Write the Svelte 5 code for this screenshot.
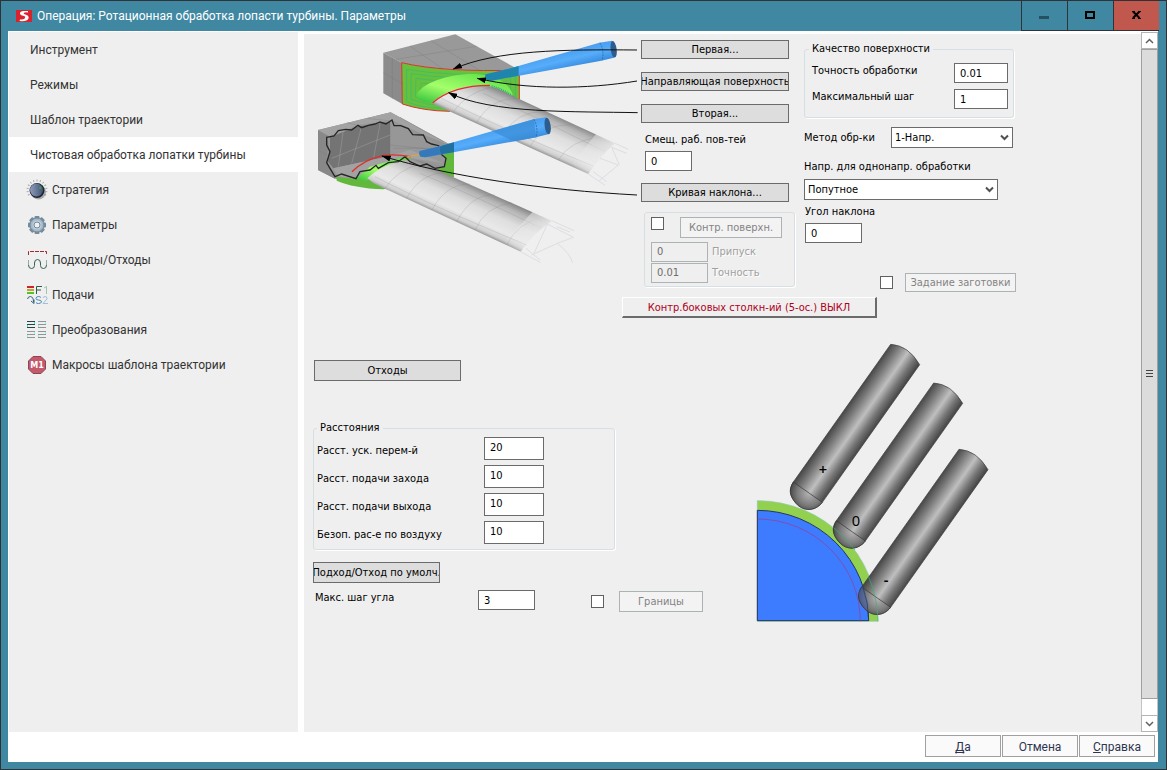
<script>
    let selected = $state('blade');
    let method = $state('one');
    let direction = $state('climb');

    const items = [
        { id: 'tool', label: 'Инструмент' },
        { id: 'modes', label: 'Режимы' },
        { id: 'template', label: 'Шаблон траектории' },
        { id: 'blade', label: 'Чистовая обработка лопатки турбины' },
        { id: 'strategy', label: 'Стратегия', icon: 'knob' },
        { id: 'params', label: 'Параметры', icon: 'gear' },
        { id: 'leads', label: 'Подходы/Отходы', icon: 'leads' },
        { id: 'feeds', label: 'Подачи', icon: 'feeds' },
        { id: 'transforms', label: 'Преобразования', icon: 'transforms' },
        { id: 'macros', label: 'Макросы шаблона траектории', icon: 'macros' }
    ];

    const distances = $state([
        { id: 'rapid', label: 'Расст. уск. перем-й', value: '20' },
        { id: 'feed-in', label: 'Расст. подачи захода', value: '10' },
        { id: 'feed-out', label: 'Расст. подачи выхода', value: '10' },
        { id: 'air', label: 'Безоп. рас-е по воздуху', value: '10' }
    ]);

    const ticks = Array.from({ length: 13 }, (_, i) => -210 + i * 20);
    const teeth = [0, 45, 90, 135, 180, 225, 270, 315];
</script>

{#snippet chevron()}
    <svg class="chevron" width="9" height="7" viewBox="0 0 9 7" aria-hidden="true">
        <path d="M1 1.5 L4.5 5 L8 1.5" fill="none" stroke="#505050" stroke-width="2" />
    </svg>
{/snippet}

{#snippet cutter(cx, cy, sign, tx, ty)}
    <g transform="translate({cx} {cy})">
        <path
            d="M160 456 L452 43 Q505 46 539 104 L247 517 C225 545 190 545 168 520 C148 497 146 478 160 456 Z"
            fill="url(#steel)" fill-opacity="0.96" stroke="#3c3c3c" stroke-width="2"
        />
        <path
            d="M160 456 L247 517 C225 545 190 545 168 520 C148 497 146 478 160 456 Z"
            fill="url(#ball)" stroke="#333" stroke-width="2"
        />
    </g>
    <text x={tx} y={ty} class="sign" class:heavy={sign !== '0'}>{sign}</text>
{/snippet}

<div class="window">
    <header class="titlebar">
        <svg class="logo" width="16" height="12" viewBox="0 0 16 12" aria-hidden="true">
            <rect width="16" height="12" fill="#d8232e" />
            <path d="M12 1 H7 Q3.500 1.500 4 4 Q4.500 5.500 8 6 Q10 6.500 9 8 Q8 9.500 4 9.500 L3.500 11 Q11 11.800 12.500 8.500 Q13.300 5.500 9.500 4.500 Q7 4 8 2.800 Q9 2 12 2.500 Z" fill="#fff" />
        </svg>
        <h1>Операция: Ротационная обработка лопасти турбины. Параметры</h1>
        <div class="controls">
            <button type="button" aria-label="Свернуть">
                <svg width="11" height="11" viewBox="0 0 11 11"><rect x="0" y="6" width="10" height="3" fill="#25505f" /></svg>
            </button>
            <button type="button" aria-label="Развернуть">
                <svg width="11" height="11" viewBox="0 0 11 11"><rect x="1" y="2" width="8" height="6" fill="none" stroke="#000" stroke-width="2" /></svg>
            </button>
            <button type="button" class="close" aria-label="Закрыть">
                <svg width="11" height="11" viewBox="0 0 11 11"><path d="M2 1.500 L8.500 8 M8.500 1.500 L2 8" stroke="#000" stroke-width="2" /><path d="M1 1.500 H4 M7 1.500 H10 M1 8.500 H4 M7 8.500 H10" stroke="#000" /></svg>
            </button>
        </div>
    </header>

    <div class="client">
        <div class="body">
            <nav class="sidebar">
                {#each items as item (item.id)}
                    <button
                        type="button"
                        class="nav-item"
                        class:selected={selected === item.id}
                        onclick={() => (selected = item.id)}
                    >
                        {#if item.icon}
                            <svg class="nav-icon" width="22" height="22" viewBox="0 0 22 22" aria-hidden="true">
                                {#if item.icon === 'knob'}
                                    {#each ticks as a}
                                        <path d="M19.500 11 H21.500" stroke="#a9a9a9" transform="rotate({a} 11 11)" />
                                    {/each}
                                    <circle cx="12.500" cy="13" r="7.500" fill="#8f8f8f" opacity="0.7" />
                                    <circle cx="11" cy="11.500" r="7.500" fill="#20242f" />
                                    <circle cx="10.500" cy="11" r="6.500" fill="url(#knob)" />
                                    <path d="M13.500 8 L15 9.500" stroke="#2fa838" stroke-width="2" />
                                {:else if item.icon === 'gear'}
                                    {#each teeth as a}
                                        <rect x="8.500" y="2" width="5" height="5" rx="1" fill="#74899a" transform="rotate({a} 11 11)" />
                                    {/each}
                                    <circle cx="11" cy="11" r="7" fill="#a3b8c8" stroke="#74899a" />
                                    <circle cx="11" cy="11" r="4.500" fill="#c4d2dd" />
                                    <circle cx="11" cy="11" r="3" fill="#efefef" stroke="#71879a" />
                                {:else if item.icon === 'leads'}
                                    <path d="M2.500 6 V2.500 H20.500 V6" fill="none" stroke="#a32a2a" stroke-dasharray="4 1" />
                                    <path d="M2.500 11 V16 M20.500 11 V16" stroke="#8fae9d" />
                                    <path d="M2.500 16 Q2.500 19.500 5.500 19.500 Q8.500 19.500 8.500 16.500 V14 Q8.500 10.500 11.500 10.500 Q14.500 10.500 14.500 14 V16.500 Q14.500 19.500 17.500 19.500 Q20.500 19.500 20.500 16" fill="none" stroke="#35604b" />
                                {:else if item.icon === 'feeds'}
                                    <path d="M1 3 H8" stroke="#c9252b" stroke-width="2" />
                                    <path d="M1 6 H8" stroke="#c9a02b" stroke-width="2" />
                                    <path d="M1 9 H8" stroke="#55c42b" stroke-width="2" />
                                    <path d="M10.500 10 V2.500 H16 M10.500 6 H15" fill="none" stroke="#2f5a47" />
                                    <path d="M18 4 L20.500 2.500 V10" fill="none" stroke="#9cc4ae" />
                                    <path d="M1.500 15 Q2 12.500 4.500 12.500 Q7.500 13 7.500 18 M5 17 L8 19.500 V15.500" fill="none" stroke="#2f6080" />
                                    <path d="M15 13.500 Q14 12.500 12.500 12.500 Q10 12.500 10 14.500 Q10 16 12.500 16 Q15.500 16 15.500 18 Q15 19.500 12.500 19.500 Q10.500 19.500 10 18.500" fill="none" stroke="#4c87b0" />
                                    <path d="M17 14 Q17.500 12.500 19 12.500 Q21.500 12.500 21 15 L17 19.500 H22" fill="none" stroke="#9fc0dc" />
                                {:else if item.icon === 'transforms'}
                                    <path d="M1 2.500 H9 M1 5.500 H9 M1 8.500 H9" stroke="#274444" />
                                    <path d="M12 2.500 H20 M12 5.500 H20 M12 8.500 H20 M1 12.500 H9 M1 15.500 H9 M1 18.500 H9 M12 12.500 H20 M12 15.500 H20 M12 18.500 H20" stroke="#8f9696" />
                                    <path d="M8.500 3 V5 M1.500 6 V8" stroke="#2ee6e6" />
                                    <path d="M19.500 3 V5 M12.500 6 V8 M8.500 13 V15 M1.500 16 V18 M19.500 13 V15 M12.500 16 V18" stroke="#8ff0f0" />
                                {:else}
                                    <path d="M7 2.500 H15 L19.500 7 V15 L15 19.500 H7 L2.500 15 V7 Z" fill="#c35a6c" stroke="#8f4453" />
                                    <text x="11" y="14" class="macro">M1</text>
                                {/if}
                            </svg>
                        {/if}
                        <span>{item.label}</span>
                    </button>
                {/each}
            </nav>

            <main class="panel">
                <div class="top">
                    <svg class="scheme" width="331" height="236" viewBox="0 12 993 708" role="img" aria-label="Схема обработки лопатки">
                        <defs>
                            <linearGradient id="knob"><stop offset="0" stop-color="#8c9cbc" /><stop offset="1" stop-color="#455474" /></linearGradient>
                            <linearGradient id="bladeUp" gradientUnits="userSpaceOnUse" x1="690" y1="236" x2="641" y2="344">
                                <stop offset="0" stop-color="#8a8a8a" /><stop offset="0.15" stop-color="#b5b5b5" /><stop offset="0.45" stop-color="#dedede" /><stop offset="0.75" stop-color="#e9e9e9" /><stop offset="0.92" stop-color="#cfcfcf" /><stop offset="1" stop-color="#9a9a9a" />
                            </linearGradient>
                            <linearGradient id="bladeLow" gradientUnits="userSpaceOnUse" x1="500" y1="472" x2="450" y2="581">
                                <stop offset="0" stop-color="#8a8a8a" /><stop offset="0.15" stop-color="#b5b5b5" /><stop offset="0.45" stop-color="#dedede" /><stop offset="0.75" stop-color="#e9e9e9" /><stop offset="0.92" stop-color="#cfcfcf" /><stop offset="1" stop-color="#9a9a9a" />
                            </linearGradient>
                            <linearGradient id="fade">
                                <stop offset="0" stop-color="#efefef" stop-opacity="0" /><stop offset="1" stop-color="#efefef" stop-opacity="0.9" />
                            </linearGradient>
                            <linearGradient id="fillet" x1="0" y1="1" x2="1" y2="0">
                                <stop offset="0" stop-color="#2fbf3a" /><stop offset="0.4" stop-color="#a4ff6a" /><stop offset="1" stop-color="#4fd83f" />
                            </linearGradient>
                            <linearGradient id="taper" gradientUnits="userSpaceOnUse" x1="720" y1="75" x2="732" y2="125">
                                <stop offset="0" stop-color="#4a9ff0" /><stop offset="0.5" stop-color="#56adfb" /><stop offset="1" stop-color="#3a8ee0" />
                            </linearGradient>
                            <marker id="arrow" viewBox="0 0 28 18" refX="26" refY="9" markerWidth="28" markerHeight="18" markerUnits="userSpaceOnUse" orient="auto">
                                <path d="M28 9 L0 0 V18 Z" />
                            </marker>
                        </defs>

                        <!-- upper block -->
                        <path d="M220 68 L436 13 L628 120 Q400 128 275 98 Z" fill="#999" />
                        <path d="M220 68 L275 98 L277 222 L220 190 Z" fill="#8b8b8b" />
                        <path d="M300 48 L400 118 M363 32 L510 122 M258 88 L500 49 M247 83 V206 M220 128 L275 160" class="mesh" />
                        <path d="M275 98 Q400 128 628 120 V210 L420 244 Q340 243 277 222 Z" fill="#66c23c" />
                        <path d="M290 118 Q420 140 615 132 M290 118 V215 Q340 236 400 234 M303 130 Q420 152 600 140 M303 130 V208 Q350 226 395 226 M318 145 Q420 160 520 148 M318 145 L316 200 Q350 216 385 218 M334 160 Q400 162 440 155 M334 160 L328 190 M616 132 V200 M602 140 V196 M588 150 V190" fill="none" stroke="#36b878" stroke-width="2" />
                        <path d="M318 198 C330 160 420 128 500 132 C570 140 600 160 612 205 L520 168 Q430 170 368 216 Q335 222 318 198 Z" fill="url(#fillet)" />
                        <path d="M545 168 Q590 180 620 208" fill="none" stroke="#1aa98a" stroke-width="5" stroke-dasharray="3 3" />
                        <path d="M275 98 Q400 128 628 120 V208 M275 98 L277 222 Q340 243 420 244" fill="none" stroke="#e0302a" stroke-width="3" />
                        <path d="M368 216 Q430 165 520 166 Q560 170 600 194 L915 340 Q870 380 835 432 L385 229 Q365 222 368 216 Z" fill="url(#bladeUp)" />
                        <path d="M520 190 Q700 270 885 365 M395 205 Q560 290 850 408 M430 245 Q470 190 540 172 M500 278 Q540 205 620 206 M580 312 Q620 245 700 244 M660 350 Q700 280 790 285 M745 390 Q780 330 870 322" class="mesh faint" />
                        <path d="M860 310 L920 338 Q870 380 838 436 L780 408 Z" fill="url(#fade)" />
                        <path d="M368 218 Q430 166 540 166" fill="none" stroke="#e0302a" stroke-width="4" />
                        <path d="M915 340 L955 358 M905 352 L950 370 M835 432 L885 466 M850 425 L890 455 M870 385 L925 405 L868 452 M905 352 L928 404" fill="none" stroke="#dcdee3" stroke-width="3" />

                        <!-- lower block -->
                        <path d="M24 300 L242 247 L432 350 V440 L230 478 L75 446 L24 420 Z" fill="#939393" />
                        <path d="M24 300 L60 320 L50 380 L75 446 L24 420 Z" fill="#888" />
                        <path d="M24 300 L242 247 L432 350 L350 318 L245 271 L140 290 L60 320 Z" fill="#a3a3a3" />
                        <path d="M432 350 V442 L380 420 L405 405 L408 385 L388 350 Z M80 436 L135 446 L240 392 L290 380 L330 400 L432 442 L220 478 Q130 474 80 452 Z" fill="#62b83c" />
                        <path d="M50 322 L107 300 L140 286 L245 271 L300 300 L345 318 L390 350 L408 388 L402 410 L285 382 L180 415 L138 446 L75 440 L50 395 L60 362 Z" fill="#979797" />
                        <path d="M60 322 L140 290 L240 275 V378 L70 415 L52 392 L60 362 Z" fill="#747474" />
                        <path d="M70 415 L240 378 L300 360 L402 400 L285 382 L138 446 L85 440 Z" fill="#a2a2a2" />
                        <path d="M65 385 L240 315 M100 300 L85 410 M155 290 L125 400 M210 282 L190 388" class="mesh light" />
                        <path d="M240 275 V378 M240 345 L390 360 M250 355 H430 M270 262 L400 335 M110 278 L160 290 M24 360 L55 378 M170 265 L235 272" class="mesh" />
                        <path d="M138 446 L180 410 L285 380 L300 390 L210 420 L170 452 Z" fill="url(#fillet)" />
                        <path d="M172 445 Q220 400 300 388 Q340 388 400 428 L725 572 Q670 610 632 665 L190 460 Z" fill="url(#bladeLow)" />
                        <path d="M330 430 Q500 500 695 595 M195 440 Q370 530 650 645 M225 476 Q260 420 330 402 M290 505 Q330 430 405 428 M365 540 Q410 460 480 462 M440 575 Q485 490 555 495 M495 600 Q525 530 605 518 M590 645 Q620 580 700 560" class="mesh faint" />
                        <path d="M668 545 L730 570 Q670 610 634 668 L576 642 Z" fill="url(#fade)" />
                        <path d="M725 572 L792 602 M712 582 L790 622 L742 640 Q780 670 788 698 M632 665 L692 698 M648 655 L690 690 M742 640 L665 675 M712 582 L670 675 M740 590 L780 606" fill="none" stroke="#dcdee3" stroke-width="3" />
                        <path d="M50 322 L72 318 L85 302 L107 298 L125 300 L144 286 L155 293 L175 286 L195 282 L210 276 L228 282 L246 270 L252 287 L272 287 L295 296 L308 314 L340 315 L350 335 L365 342 L386 347 L388 368 L408 385 L403 410 L375 415 L350 402 L330 408 L300 395 L285 380 L265 395 L235 398 L205 415 L198 406 L180 420 L150 425 L138 446 L95 432 L75 440 L60 415 L50 398 L60 365 L50 345 Z" fill="none" stroke="#262626" stroke-width="4" />
                        <path d="M126 425 Q160 390 220 376 Q260 372 302 380" fill="none" stroke="#e0302a" stroke-width="4" />
                        <path d="M292 380 L335 373" stroke="#f2a12c" stroke-width="3" />

                        <!-- tapered tools -->
                        <path d="M527 133 Q522 142 530 150 L545 152 L870 93 L912 83 Q924 60 906 32 L868 38 L590 118 Z" fill="url(#taper)" />
                        <path d="M527 133 Q522 142 530 150 L545 152 L626 137 V108 L590 118 Z" fill="#1f85ad" />
                        <path d="M870 38 Q884 66 876 92" fill="none" stroke="#1c5fa5" stroke-width="2" stroke-dasharray="6 3" />
                        <ellipse cx="911" cy="58" rx="9" ry="25" fill="#2d5d8f" transform="rotate(-8 911 58)" />
                        <g transform="translate(-198 230)">
                            <path d="M527 133 Q522 142 530 150 L545 152 L870 93 L912 83 Q924 60 906 32 L868 38 L590 118 Z" fill="url(#taper)" />
                            <path d="M527 133 Q522 142 530 150 L545 152 L592 143 Q580 130 590 118 Z" fill="#3579bb" />
                            <path d="M590 118 Q580 130 592 143 L630 137 V107 Z" fill="#2270a0" />
                            <path d="M745 74 L870 38 L876 92 L810 104 Z" fill="#3a8bd5" opacity="0.7" />
                            <path d="M870 38 Q884 66 876 92" fill="none" stroke="#1c5fa5" stroke-width="2" stroke-dasharray="6 3" />
                            <ellipse cx="911" cy="58" rx="9" ry="25" fill="#2d5d8f" transform="rotate(-8 911 58)" />
                        </g>

                        <g fill="none" stroke="#111" stroke-width="3">
                            <path d="M981 60 C760 58 560 60 430 117" marker-end="url(#arrow)" />
                            <path d="M981 153 C830 178 650 180 502 145" marker-end="url(#arrow)" />
                            <path d="M983 248 C800 244 540 252 416 188" marker-end="url(#arrow)" />
                            <path d="M981 495 C700 480 420 440 216 378" marker-end="url(#arrow)" />
                        </g>
                    </svg>

                    <section class="surfaces">
                        <div class="picks">
                            <button type="button" class="btn">Первая...</button>
                            <button type="button" class="btn">Направляющая поверхность</button>
                            <button type="button" class="btn">Вторая...</button>
                        </div>
                        <div class="offset">
                            <label for="offset">Смещ. раб. пов-тей</label>
                            <input id="offset" class="box tiny" type="text" value="0" />
                        </div>
                        <button type="button" class="btn">Кривая наклона...</button>
                        <fieldset class="group check-group">
                            <div class="check-row">
                                <input type="checkbox" aria-label="Контр. поверхн." />
                                <button type="button" class="btn" disabled>Контр. поверхн.</button>
                            </div>
                            <div class="pair">
                                <input id="stock" class="box" type="text" value="0" disabled />
                                <label for="stock">Припуск</label>
                            </div>
                            <div class="pair">
                                <input id="accuracy" class="box" type="text" value="0.01" disabled />
                                <label for="accuracy">Точность</label>
                            </div>
                        </fieldset>
                    </section>

                    <section class="quality">
                        <fieldset class="group quality-group">
                            <legend>Качество поверхности</legend>
                            <div class="field">
                                <label for="tolerance">Точность обработки</label>
                                <input id="tolerance" class="box" type="text" value="0.01" />
                            </div>
                            <div class="field">
                                <label for="max-step">Максимальный шаг</label>
                                <input id="max-step" class="box" type="text" value="1" />
                            </div>
                        </fieldset>
                        <div class="method">
                            <label for="method">Метод обр-ки</label>
                            <div class="select">
                                <select id="method" bind:value={method}>
                                    <option value="one">1-Напр.</option>
                                    <option value="zigzag">Зигзаг</option>
                                </select>
                                {@render chevron()}
                            </div>
                        </div>
                        <div class="stack">
                            <label for="direction">Напр. для однонапр. обработки</label>
                            <div class="select">
                                <select id="direction" bind:value={direction}>
                                    <option value="climb">Попутное</option>
                                    <option value="conventional">Встречное</option>
                                </select>
                                {@render chevron()}
                            </div>
                        </div>
                        <div class="stack angle">
                            <label for="tilt">Угол наклона</label>
                            <input id="tilt" class="box" type="text" value="0" />
                        </div>
                        <div class="check-row blank">
                            <input type="checkbox" aria-label="Задание заготовки" />
                            <button type="button" class="btn" disabled>Задание заготовки</button>
                        </div>
                    </section>
                </div>

                <button type="button" class="collision">Контр.боковых столкн-ий (5-ос.) ВЫКЛ</button>

                <div class="bottom">
                    <section class="links">
                        <button type="button" class="btn tall exits">Отходы</button>
                        <fieldset class="group distances">
                            <legend>Расстояния</legend>
                            {#each distances as row (row.id)}
                                <div class="field">
                                    <label for={row.id}>{row.label}</label>
                                    <input id={row.id} class="box" type="text" bind:value={row.value} />
                                </div>
                            {/each}
                        </fieldset>
                        <button type="button" class="btn tall defaults">Подход/Отход по умолч.</button>
                        <div class="limits">
                            <label for="max-angle">Макс. шаг угла</label>
                            <input id="max-angle" class="box" type="text" value="3" />
                            <div class="check-row">
                                <input type="checkbox" aria-label="Границы" />
                                <button type="button" class="btn tall" disabled>Границы</button>
                            </div>
                        </div>
                    </section>

                    <svg class="tilt" width="260" height="300" viewBox="0 0 780 900" role="img" aria-label="Угол наклона инструмента">
                        <defs>
                            <linearGradient id="steel" gradientUnits="userSpaceOnUse" x1="160" y1="456" x2="247" y2="517">
                                <stop offset="0" stop-color="#3e3e3e" /><stop offset="0.25" stop-color="#757575" /><stop offset="0.55" stop-color="#bdbdbd" /><stop offset="0.8" stop-color="#707070" /><stop offset="1" stop-color="#404040" />
                            </linearGradient>
                            <radialGradient id="ball" gradientUnits="userSpaceOnUse" cx="208" cy="490" r="60">
                                <stop offset="0" stop-color="#b5b5b5" /><stop offset="0.6" stop-color="#7c7c7c" /><stop offset="1" stop-color="#444" />
                            </radialGradient>
                        </defs>
                        <path d="M52 512 A362 362 0 0 1 414 874 H52 Z" fill="#92d050" stroke="#8fc9b0" stroke-width="2" />
                        <path d="M52 541 A334 333 0 0 1 386 872 H52 Z" fill="#3d7bff" stroke="#26365e" stroke-width="3" />
                        <path d="M52 567 A309 307 0 0 1 361 874" fill="none" stroke="#a03b86" stroke-width="2" />
                        {@render cutter(0, 0, '+', 249, 434)}
                        {@render cutter(129, 116, '0', 348, 589)}
                        {@render cutter(205, 315, '-', 438, 764)}
                        <path d="M368 768 Q384 810 386 828 L378 838 Q350 806 358 785 Z" fill="#4665ad" opacity="0.6" />
                        <path d="M368 768 Q386 820 386 872" fill="none" stroke="#26365e" stroke-width="2" />
                        <path d="M281 593 A362 362 0 0 1 345 660 M385 738 A362 362 0 0 1 414 874" fill="none" stroke="#3fae7c" stroke-width="2" />
                    </svg>
                </div>
            </main>

            <div class="scrollbar">
                <button type="button" aria-label="Вверх">
                    <svg width="9" height="6" viewBox="0 0 9 6"><path d="M1 5 L4.500 1.500 L8 5" fill="none" stroke="#606060" stroke-width="1.500" /></svg>
                </button>
                <div class="thumb">
                    <svg width="7" height="8" viewBox="0 0 7 8" aria-hidden="true"><path d="M0 0.500 H7 M0 3.500 H7 M0 6.500 H7" stroke="#444" /></svg>
                </div>
                <div class="track"></div>
                <button type="button" aria-label="Вниз">
                    <svg width="9" height="6" viewBox="0 0 9 6"><path d="M1 1 L4.500 4.500 L8 1" fill="none" stroke="#606060" stroke-width="1.500" /></svg>
                </button>
            </div>
        </div>

        <footer>
            <button type="button"><u>Д</u>а</button>
            <button type="button">Отмена</button>
            <button type="button"><u>С</u>правка</button>
        </footer>
    </div>
</div>

<style>
    :global(body) {
        margin: 0;
        background: #4088a2;
    }

    .window {
        box-sizing: border-box;
        display: flex;
        flex-direction: column;
        min-height: 100vh;
        border: 1px solid #2f3338;
        background: #4088a2;
        font-family: Tahoma, "DejaVu Sans Condensed", "DejaVu Sans", sans-serif;
        font-size: 11px;
        line-height: 14px;
        color: #000;
    }

    button,
    input,
    select {
        box-sizing: border-box;
        margin: 0;
        font: inherit;
        color: inherit;
        border-radius: 0;
    }

    label {
        white-space: nowrap;
    }

    /* title bar */
    .titlebar {
        display: flex;
        align-items: center;
        height: 30px;
        padding-left: 15px;
        padding-right: 7px;
    }

    .logo {
        margin-right: 5px;
    }

    h1 {
        flex: 1;
        margin: 0;
        font-family: "Segoe UI", Roboto, "Noto Sans", sans-serif;
        font-size: 12px;
        font-weight: 400;
        color: #fff;
    }

    .controls {
        display: flex;
        align-self: stretch;
    }

    .controls button {
        display: grid;
        place-items: center;
        width: 46px;
        padding: 0;
        border: solid #2f3338;
        border-width: 0 0 1px 1px;
        background: #4088a2;
    }

    .controls .close {
        background: #c1584e;
    }

    /* frame around sidebar, panel and footer */
    .client {
        flex: 1;
        display: flex;
        flex-direction: column;
        margin: 0 8px 7px 7px;
        padding: 1px 0 0 1px;
        background: #fff;
    }

    .body {
        flex: 1;
        display: flex;
    }

    .sidebar {
        width: 289px;
        flex-shrink: 0;
        margin-right: 6px;
        background: #efefef;
    }

    .nav-item {
        display: flex;
        align-items: center;
        gap: 4px;
        width: 100%;
        height: 35px;
        padding: 0 0 0 21px;
        border: 0;
        background: none;
        font-family: Roboto, sans-serif;
        font-size: 12px;
        color: #333;
        text-align: left;
    }

    .nav-item.selected {
        background: #fff;
    }

    .nav-icon {
        margin-left: -4px;
        flex-shrink: 0;
    }

    .macro {
        font: 700 8px "DejaVu Sans", sans-serif;
        fill: #fff;
        text-anchor: middle;
    }

    .panel {
        flex: 1;
        margin-top: 2px;
        padding-left: 6px;
        background: #efefef;
    }

    .top {
        display: flex;
        height: 263px;
    }

    .scheme,
    .tilt {
        display: block;
        flex-shrink: 0;
    }

    .mesh {
        fill: none;
        stroke: #777;
        stroke-opacity: 0.45;
        stroke-width: 2;
    }

    .mesh.light {
        stroke: #bbb;
    }

    .mesh.faint {
        stroke-opacity: 0.3;
    }

    .sign {
        font: 44px "Noto Sans", sans-serif;
        text-anchor: middle;
        fill: #000;
    }

    .sign.heavy {
        font-weight: 600;
    }

    /* controls */
    .btn {
        display: flex;
        align-items: center;
        justify-content: center;
        height: 19px;
        padding: 1px 0 0;
        overflow: hidden;
        white-space: nowrap;
        border: 1px solid #6b6b6b;
        background: #dddddd;
    }

    .btn.tall {
        height: 21px;
    }

    .btn:disabled {
        border-color: #adb2b5;
        background: #f3f3f3;
        color: #838383;
    }

    .box {
        width: 57px;
        height: 20px;
        padding: 0 5px;
        border: 1px solid #6b6b6b;
        background: #fff;
    }

    .box:disabled {
        border-color: #adb2b5;
        background: #efefef;
        color: #6d6d6d;
    }

    input[type="checkbox"] {
        appearance: none;
        width: 13px;
        height: 13px;
        border: 1px solid #606060;
        background: #fff;
    }

    .group {
        min-width: 0;
        margin: 0;
        border: 1px solid #d5dfe5;
        border-radius: 3px;
        box-shadow: 1px 1px 0 #fff;
    }

    .group legend {
        padding: 0 3px;
    }

    .check-row {
        display: flex;
        align-items: flex-start;
        gap: 16px;
    }

    .select {
        display: grid;
        align-items: center;
    }

    .select select {
        grid-area: 1 / 1;
        appearance: none;
        width: 100%;
        height: 21px;
        padding: 1px 20px 0 3px;
        border: 1px solid #6b6b6b;
        background: #fff;
    }

    .chevron {
        grid-area: 1 / 1;
        justify-self: end;
        margin-right: 4px;
        pointer-events: none;
    }

    /* surface pickers */
    .surfaces {
        width: 154px;
        padding-top: 6px;
    }

    .surfaces > .btn,
    .picks .btn {
        width: 148px;
    }

    .picks {
        display: flex;
        flex-direction: column;
        gap: 13px;
    }

    .offset {
        display: flex;
        flex-direction: column;
        gap: 4px;
        padding: 10px 4px 12px;
    }

    .tiny {
        width: 47px;
    }

    .check-group {
        display: flex;
        flex-direction: column;
        margin: 10px 0 0 3px;
        padding: 4px 6px 3px;
    }

    .check-group .check-row {
        padding-bottom: 3px;
    }

    .check-group .btn {
        width: 102px;
        height: 21px;
    }

    .pair {
        display: flex;
        align-items: center;
        gap: 4px;
        height: 21px;
    }

    .pair label {
        color: #a0a0a0;
        text-shadow: 1px 1px 0 #fff;
    }

    /* quality and direction */
    .quality {
        width: 212px;
        padding: 8px 0 0 9px;
    }

    .quality-group {
        display: flex;
        flex-direction: column;
        gap: 6px;
        width: 210px;
        box-sizing: border-box;
        padding: 7px 5px 8px 7px;
    }

    .field {
        display: flex;
        justify-content: space-between;
        line-height: 16px;
    }

    .quality-group legend {
        margin-left: -3px;
    }

    .quality-group .box {
        width: 54px;
    }

    .method {
        display: flex;
        align-items: center;
        justify-content: space-between;
        padding-top: 9px;
    }

    .method .select {
        width: 122px;
        margin-right: 3px;
    }

    .stack {
        display: flex;
        flex-direction: column;
        gap: 5px;
        padding-top: 12px;
    }

    .stack .select {
        width: 194px;
    }

    .stack.angle {
        gap: 4px;
        padding: 5px 0 30px 1px;
    }

    .blank {
        align-items: center;
        justify-content: flex-end;
        gap: 12px;
    }

    .blank .btn {
        width: 111px;
    }

    .collision {
        display: block;
        width: 255px;
        height: 21px;
        margin-left: 312px;
        padding: 2px 0 0;
        border: solid;
        border-width: 1px 2px 2px 1px;
        border-color: #fff #6b6b6b #6b6b6b #fff;
        background: #efefef;
        color: #b00020;
    }

    /* distances and tilt sketch */
    .bottom {
        display: flex;
        align-items: flex-start;
    }

    .links {
        width: 430px;
        padding-top: 42px;
    }

    .exits {
        width: 147px;
        margin-left: 4px;
    }

    .distances {
        display: flex;
        flex-direction: column;
        gap: 5px;
        box-sizing: border-box;
        width: 302px;
        margin: 40px 0 12px 3px;
        padding: 2px 70px 5px 3px;
    }

    .distances .box {
        width: 60px;
        height: 23px;
        padding-bottom: 2px;
    }

    .distances .field {
        align-items: flex-end;
        line-height: 18px;
    }

    .distances legend {
        line-height: 14px;
    }

    .defaults {
        width: 127px;
        margin-left: 3px;
    }

    .limits {
        display: flex;
        align-items: flex-start;
        padding: 7px 0 0 5px;
        line-height: 16px;
    }

    .limits label {
        width: 163px;
    }

    .limits .check-row {
        align-items: center;
        gap: 15px;
        margin-left: 56px;
        padding-top: 1px;
    }

    .limits .btn {
        width: 84px;
    }

    .tilt {
        margin-top: 12px;
    }

    /* scroll bar */
    .scrollbar {
        display: flex;
        flex-direction: column;
        box-sizing: border-box;
        width: 17px;
    }

    .scrollbar button {
        display: grid;
        place-items: center;
        height: 17px;
        padding: 0;
        border: 1px solid #b4b4b4;
        background: #fff;
    }

    .thumb {
        flex: 1;
        display: grid;
        place-items: center;
        border: 1px solid #a0a0a0;
        background: #dcdcdc;
    }

    .track {
        height: 16px;
        border: solid #c4c4c4;
        border-width: 0 1px;
    }

    footer {
        display: flex;
        justify-content: flex-end;
        gap: 1px;
        padding: 3px 3px 5px;
    }

    footer button {
        width: 76px;
        height: 22px;
        padding: 2px 0 0;
        border: 1px solid #a0a0a0;
        background: #fafafa;
        font-family: Roboto, sans-serif;
        font-size: 12px;
        color: #2f3550;
    }

    footer u {
        text-decoration-skip-ink: none;
    }
</style>
